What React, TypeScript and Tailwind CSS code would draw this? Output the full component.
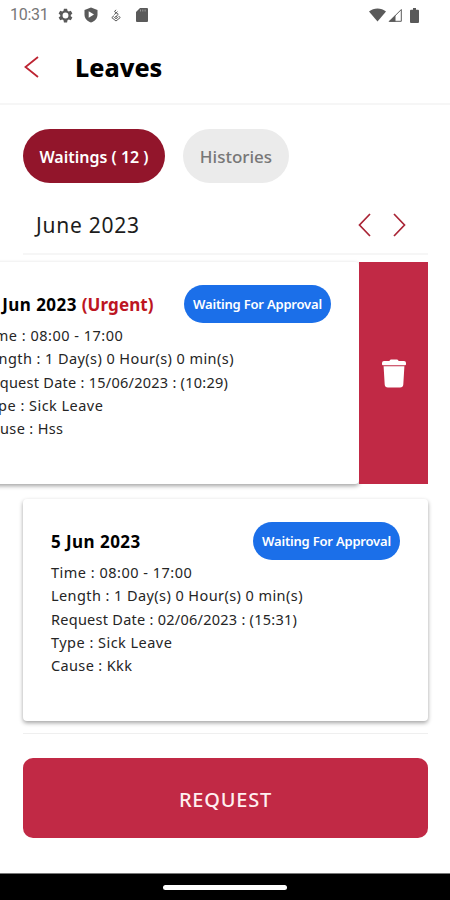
import React from 'react';

interface Leave {
  date: string;
  urgent?: boolean;
  time: string;
  length: string;
  requested: string;
  type: string;
  cause: string;
}

const leaves: Leave[] = [
  {
    date: '15 Jun 2023',
    urgent: true,
    time: '08:00 - 17:00',
    length: '1 Day(s) 0 Hour(s) 0 min(s)',
    requested: '15/06/2023 : (10:29)',
    type: 'Sick Leave',
    cause: 'Hss'
  },
  {
    date: '5 Jun 2023',
    time: '08:00 - 17:00',
    length: '1 Day(s) 0 Hour(s) 0 min(s)',
    requested: '02/06/2023 : (15:31)',
    type: 'Sick Leave',
    cause: 'Kkk'
  }
];

const StatusBar: React.FC = () => (
  <div className="flex h-[30px] shrink-0 items-center pl-[10px] pr-[31px] text-[#5a5a5a]">
    <span className="w-[39px] whitespace-nowrap font-['Roboto'] text-[16px] leading-[30px] tracking-[-0.25px] text-[#777]">10:31</span>
    {/* Settings */}
    <svg className="ml-[9px] h-[15px] w-[15px]" viewBox="0 0 24 24" fill="currentColor">
      <path
        fillRule="evenodd"
        d="M9.500 1h5l.7 3.400 2 1.100 3.300-1.100L23 8.700l-2.600 2.300v2L23 15.300l-2.500 4.300-3.300-1.100-2 1.100-.7 3.400h-5l-.7-3.400-2-1.100-3.300 1.100L1 15.300 3.600 13v-2L1 8.700l2.500-4.300 3.300 1.100 2-1.100zM12 7.300a4.700 4.700 0 1 0 0 9.400a4.700 4.700 0 1 0 0-9.400z"
      />
    </svg>
    {/* Play protect */}
    <svg className="ml-[11px] h-[16px] w-[14px]" viewBox="0 0 14 16">
      <path d="M7 0.500L13.500 3v4.500c0 4-2.700 6.800-6.500 8-3.800-1.200-6.500-4-6.500-8V3z" fill="currentColor" />
      <path d="M4.700 4.200v6.600l5.300-3.300z" fill="white" />
    </svg>
    {/* Debug */}
    <svg className="ml-[13px] h-[13px] w-[10px]" viewBox="0 0 10 13" fill="none" stroke="currentColor" strokeWidth="1">
      <path d="M5 .8L3.500 2.600 7.300 5.300 5 7.500M6.500 2.600L3.200 5.600M3 6.700L.8 8.600 5 12l4.200-3.400L7.500 6.900M3.500 8.500L5 9.700l1.600-1.200L5 7.300z" />
    </svg>
    {/* Memory card */}
    <svg className="ml-[15px] h-[14px] w-[12px]" viewBox="0 0 12 14">
      <path d="M4 0h7q1 0 1 1v12q0 1-1 1H1q-1 0-1-1V4z" fill="currentColor" />
      <path d="M4.500 1.500v2M6.800 1.500v2M9.100 1.500v2" stroke="#aaa" strokeWidth=".8" />
    </svg>
    <svg className="ml-auto h-[14px] w-[17px]" viewBox="0 0 17 14">
      <path d="M0 3.500C4.800-.5 12.200-.5 17 3.500L8.500 13.500z" fill="currentColor" />
    </svg>
    <svg className="ml-[2px] h-[14px] w-[14px]" viewBox="0 0 14 14">
      <path d="M1.500 13.300L13.300 1.500v11.800z" fill="none" stroke="currentColor" strokeWidth="1" />
      <path d="M.5 13.800L7.500 7v6.800z" fill="currentColor" />
    </svg>
    <svg className="ml-[8px] h-[15px] w-[9px]" viewBox="0 0 9 15">
      <path d="M3 0h3v1.700h2q1 0 1 1V14q0 1-1 1H1q-1 0-1-1V2.700q0-1 1-1h2z" fill="currentColor" />
    </svg>
  </div>
);

const LeaveCard: React.FC<{ leave: Leave }> = ({ leave }) => (
  <article className="h-[222px] w-[405px] shrink-0 rounded-[4px] bg-white px-7 pt-[23px] shadow-[0_2px_4px_rgba(0,0,0,0.36)]">
    <div className="flex h-[38px] items-center justify-between whitespace-nowrap">
      <h2 className={`pt-[2px] text-[17px] font-bold tracking-[0.45px] ${leave.urgent ? '-ml-[5px]' : ''}`}>
        {leave.date} {leave.urgent && <span className="tracking-[0.1px] text-[#bd1522]">(Urgent)</span>}
      </h2>
      <span className="flex h-[38px] w-[147px] items-center justify-center rounded-full bg-[#1b6fe9] pt-px text-[13px] font-semibold tracking-[-0.2px] text-white">
        Waiting For Approval
      </span>
    </div>
    <div className="mt-px whitespace-nowrap text-[14.500px] leading-[23.300px] text-[#252525]">
      <p className="tracking-[0.5px]">Time : {leave.time}</p>
      <p className="tracking-[0.42px]">Length : {leave.length}</p>
      <p className="tracking-[0.26px]">Request Date : {leave.requested}</p>
      <p className="tracking-[0.47px]">Type : {leave.type}</p>
      <p className="tracking-[0.36px]">Cause : {leave.cause}</p>
    </div>
  </article>
);

const App: React.FC = () => {
  return (
    <div className="flex h-[900px] w-[450px] flex-col overflow-hidden bg-white font-['Noto_Sans',sans-serif] text-black">
      <StatusBar />
      <header className="flex h-[75px] shrink-0 items-center border-b-2 border-[#f6f6f6] pl-[24px]">
        <button aria-label="Back">
          <svg className="h-[22px] w-[15px]" viewBox="0 0 15 22" fill="none" stroke="#bd2432" strokeWidth="1.800">
            <path d="M14 1L1.500 11 14 21" />
          </svg>
        </button>
        <h1 className="ml-[36px] text-[25px] font-extrabold leading-[30px]">Leaves</h1>
      </header>

      <nav className="ml-[23px] mt-[24px] flex h-[54px] shrink-0 gap-[18px]">
        <button className="w-[142px] whitespace-nowrap rounded-full bg-[#92152b] pt-px text-[16px] font-semibold text-white">Waitings ( 12 )</button>
        <button className="w-[106px] rounded-full bg-[#ebebeb] pt-px text-[17px] font-medium text-[#777]">Histories</button>
      </nav>

      <section className="ml-[23px] mr-[22px] flex h-[72px] shrink-0 items-center justify-between border-b-2 border-[#f6f6f6] pl-[13px] pr-[22px] pt-[14px]">
        <span className="text-[21px] leading-[28px] tracking-[0.75px] text-[#1c1c1c]">June 2023</span>
        <div className="flex gap-[22px]">
          <svg className="h-[24px] w-[13px]" viewBox="0 0 13 24" fill="none" stroke="#a92435" strokeWidth="1.700">
            <path d="M12 1L1.500 12 12 23" />
          </svg>
          <svg className="h-[24px] w-[13px]" viewBox="0 0 13 24" fill="none" stroke="#a92435" strokeWidth="1.700">
            <path d="M1 1l10.500 11L1 23" />
          </svg>
        </div>
      </section>

      <main className="flex h-[478px] shrink-0 flex-col gap-[15px] overflow-hidden pt-[7px]">
        {/* Swiped row with the delete action revealed */}
        <div className="flex w-[428px] shrink-0 justify-end">
          <LeaveCard leave={leaves[0]} />
          <button aria-label="Delete" className="z-10 flex h-[222px] w-[69px] shrink-0 items-center justify-center bg-[#c12945]">
            <svg className="h-[29px] w-[24px]" viewBox="0 0 24 29" fill="white">
              <path d="M9 0.500h6q1.500 0 1.500 1.500H22q2 0 2 2v1.200q0 1-1 1H1q-1 0-1-1V4q0-2 2-2h5.500Q7.500.5 9 .5zM1.600 7.200h20.800L21.300 25.500q-.2 3-3.200 3H5.900q-3 0-3.200-3z" />
            </svg>
          </button>
        </div>
        <div className="ml-[23px]">
          <LeaveCard leave={leaves[1]} />
        </div>
      </main>

      <footer className="ml-[23px] mr-[22px] border-t border-[#efefef] pt-[24px]">
        <button className="h-[80px] w-full rounded-[10px] bg-[#c12945] pt-[3px] text-[20px] font-medium tracking-[0.8px] text-[#fff0f0]">REQUEST</button>
      </footer>

      <div className="mt-auto flex h-[27px] shrink-0 items-center justify-center border-t border-[#777] bg-black">
        <div className="h-[5px] w-[124px] rounded-full bg-white" />
      </div>
    </div>
  );
};
export default App;
